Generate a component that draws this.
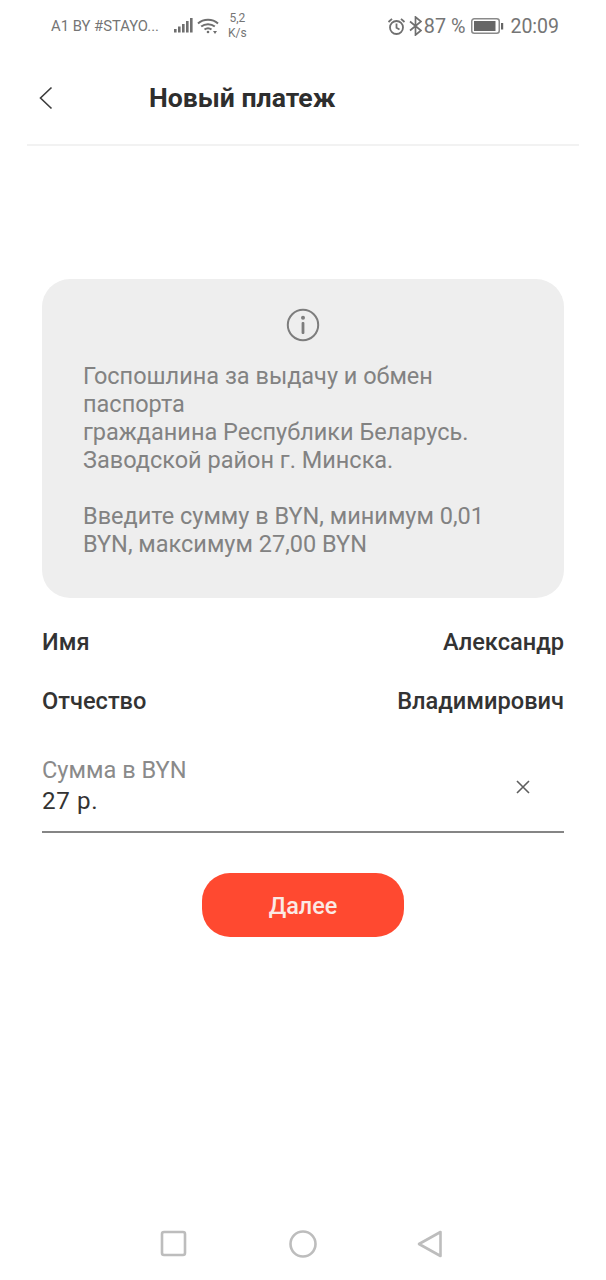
<style>
:global(body){margin:0;background:#fff;}
.page{width:606px;height:1280px;display:flex;flex-direction:column;font-family:Roboto,"Noto Sans",sans-serif;color:#333;overflow:hidden;background:#fff;}
.status{height:52px;flex:none;display:flex;align-items:center;padding:0 47px 0 51px;box-sizing:border-box;color:#757575;font-size:14px;}
.carrier{width:120px;white-space:nowrap;font-size:14.8px;}
.sig{margin-left:3px;}
.wifi{margin-left:3px;}
.speed{margin-left:9px;font-size:12px;line-height:15px;text-align:center;}
.right{margin-left:auto;display:flex;align-items:center;font-size:19.5px;}
.bt{margin-left:3px;}
.pct{margin-left:2px;white-space:nowrap;font-size:19.8px;}
.batt{margin-left:6px;}
.time{margin-left:6px;}
.head{margin:0 27px;height:94px;flex:none;box-sizing:border-box;border-bottom:2px solid #f2f2f2;display:flex;align-items:center;padding:0 0 1px 12px;}
.head h1{margin:0 0 0 96px;font-size:26.6px;line-height:32px;font-weight:700;color:#2e2e2e;letter-spacing:0;}
.main{flex:1;padding:133px 42px 0;display:flex;flex-direction:column;}
.note{background:#eee;border-radius:28px;height:319px;box-sizing:border-box;padding:29px 41px 0;color:#828282;font-size:23.5px;line-height:28px;}
.i{display:block;margin:0 auto 20px;}
.note p{margin:0;}
.note p+p{margin-top:27.5px;}
.row{display:flex;justify-content:space-between;font-size:23.6px;font-weight:500;line-height:28px;color:#333;}
.row.first{margin-top:30px;}
.row+.row{margin-top:31px;}
.field{margin-top:41px;height:77px;box-sizing:border-box;border-bottom:2px solid #858585;display:flex;justify-content:space-between;}
.lab{font-size:23.6px;line-height:28px;color:#8a8a8a;}
.val{font-size:24.2px;line-height:28px;color:#333;letter-spacing:.6px;margin-top:3px;}
.x{margin:23px 33px 0 0;}
.btn{align-self:center;margin-top:40px;width:202px;height:64px;border:0;border-radius:28px;background:#ff4930;color:#fbe9e4;font:500 23.4px Roboto,sans-serif;padding:2px 0 0;}
.nav{height:50px;flex:none;display:flex;align-items:flex-start;padding:0 0 0 160px;}
.nav svg{display:block;}
.circ{margin-left:102px;}
.tri{margin-left:100px;}
</style>

<div class="page">
  <div class="status">
    <span class="carrier">A1 BY #STAYO...</span>
    <svg class="sig" width="20" height="18" viewBox="0 0 20 18" fill="#6f6f6f"><rect x="0" y="12" width="2.6" height="3.5"/><rect x="4" y="9.5" width="2.6" height="6"/><rect x="8" y="7" width="2.6" height="8.5"/><rect x="12" y="4" width="2.6" height="11.5"/><rect x="16" y="1" width="2.6" height="14.5"/></svg>
    <svg class="wifi" width="22" height="18" viewBox="0 0 22 18" fill="none" stroke="#6f6f6f" stroke-width="2"><path d="M1 6.5C6.5 1.5 15.5 1.5 21 6.5"/><path d="M4.2 9.6C8 6.3 14 6.3 17.8 9.6"/><path d="M7.5 12.5C9.5 11 12.5 11 14.5 12.5"/><circle cx="11" cy="15" r="1.3" fill="#6f6f6f" stroke="none"/><path d="M16 14h4l-2 3z" fill="#6f6f6f" stroke="none"/></svg>
    <span class="speed">5,2<br>K/s</span>
    <div class="right">
      <svg width="19" height="19" viewBox="0 0 19 19" fill="none" stroke="#6f6f6f" stroke-width="1.8"><circle cx="9.5" cy="10.5" r="6.5"/><path d="M9.5 6.5v4.3l3 1.7M1.5 5L5 1.8M17.5 5L14 1.8"/></svg>
      <svg class="bt" width="13" height="20" viewBox="0 0 13 20" fill="none" stroke="#6f6f6f" stroke-width="1.7"><path d="M1 5.5l11 9-5.5 4.5V1L12 5.5l-11 9"/></svg>
      <span class="pct">87 %</span>
      <svg class="batt" width="33" height="18" viewBox="0 0 33 18"><rect x=".75" y="1.75" width="27.5" height="14.5" rx="2.5" fill="none" stroke="#8a8a8a" stroke-width="1.5"/><rect x="3" y="4" width="21.5" height="10" fill="#666"/><rect x="30" y="6" width="2.2" height="6.5" fill="#666"/></svg>
      <span class="time">20:09</span>
    </div>
  </div>
  <div class="head">
    <svg width="14" height="24" viewBox="0 0 14 24" fill="none" stroke="#3c3c3c" stroke-width="1.6"><path d="M12.5 1.5L1.5 12l11 10.5"/></svg>
    <h1>Новый платеж</h1>
  </div>
  <div class="main">
    <div class="note">
      <svg class="i" width="34" height="34" viewBox="0 0 34 34" fill="none"><circle cx="17" cy="17" r="15.2" stroke="#7d7d7d" stroke-width="2"/><rect x="15.6" y="14" width="2.8" height="12" rx="1" fill="#7d7d7d"/><circle cx="17" cy="9.8" r="2" fill="#7d7d7d"/></svg>
      <p>Госпошлина за выдачу и обмен паспорта<br>гражданина Республики Беларусь.<br>Заводской район г. Минска.</p>
      <p>Введите сумму в BYN, минимум 0,01 BYN, максимум 27,00 BYN</p>
    </div>
    <div class="row first"><span>Имя</span><span>Александр</span></div>
    <div class="row"><span>Отчество</span><span>Владимирович</span></div>
    <div class="field">
      <div><div class="lab">Сумма в BYN</div><div class="val">27 р.</div></div>
      <svg class="x" width="16" height="16" viewBox="0 0 16 16" fill="none" stroke="#5f5f5f" stroke-width="1.6"><path d="M2 2l12 12M14 2L2 14"/></svg>
    </div>
    <button class="btn">Далее</button>
  </div>
  <div class="nav">
    <svg width="27" height="27" viewBox="0 0 27 27" fill="none" stroke="#bdbdbd" stroke-width="2.6"><rect x="2" y="2" width="23" height="23" rx="2"/></svg>
    <svg class="circ" width="28" height="28" viewBox="0 0 28 28" fill="none" stroke="#bdbdbd" stroke-width="2.6"><circle cx="14" cy="14" r="12.5"/></svg>
    <svg class="tri" width="26" height="28" viewBox="0 0 26 28" fill="none" stroke="#bdbdbd" stroke-width="2.6" stroke-linejoin="round"><path d="M23.5 2v24L2 14z"/></svg>
  </div>
</div>
